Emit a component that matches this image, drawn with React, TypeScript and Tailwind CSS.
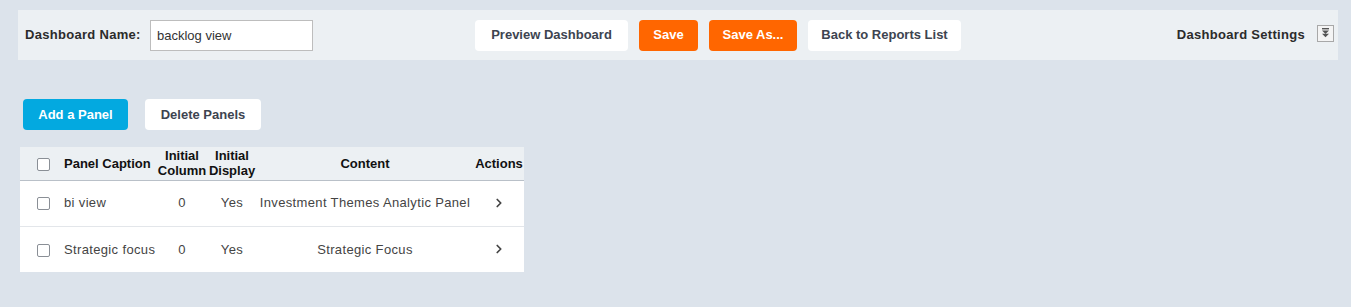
import { ChevronRight } from 'lucide-react';

const rows = [
  { caption: 'bi view', column: '0', display: 'Yes', content: 'Investment Themes Analytic Panel' },
  { caption: 'Strategic focus', column: '0', display: 'Yes', content: 'Strategic Focus' },
];

function Box() {
  return <span className="inline-block h-[13px] w-[13px] rounded-[2px] border border-[#8a8f96] bg-white align-middle" />;
}

export default function App() {
  return (
    <div className="min-h-[307px] bg-[#dce3eb] pl-[18px] pr-[13px] pt-[10px] text-[13px] text-[#333] [font-family:'Liberation_Sans',Arial,sans-serif]">
      {/* Toolbar */}
      <div className="flex h-[50px] items-center bg-[#ecf0f3] pl-[7px] pr-[4px]">
        <span className="w-[125px] font-bold tracking-[0.3px] text-[#2b2b2b]">Dashboard Name:</span>
        <input
          readOnly
          value="backlog view"
          className="h-[31px] w-[163px] border border-[#bdbdbd] bg-white px-[6px] text-[13px] text-[#333] outline-none"
        />
        <div className="ml-[162px] flex gap-[11px]">
          <button className="h-[31px] w-[153px] rounded-[4px] bg-white font-semibold text-[#3d4450]">Preview Dashboard</button>
          <button className="h-[31px] w-[59px] rounded-[4px] bg-[#ff6600] font-semibold text-white">Save</button>
          <button className="h-[31px] w-[88px] rounded-[4px] bg-[#ff6600] font-semibold text-white">Save As...</button>
          <button className="h-[31px] w-[153px] rounded-[4px] bg-white font-semibold text-[#3d4450]">Back to Reports List</button>
        </div>
        <span className="ml-auto font-bold tracking-[0.3px] text-[#2b2b2b]">Dashboard Settings</span>
        <span className="ml-[12px] mb-[4px] flex h-[17px] w-[17px] items-center justify-center border border-[#a8a8a8] bg-[#f4f4f4]">
          <svg width="9" height="10" viewBox="0 0 9 10" fill="#555">
            <rect x="1" y="0" width="7" height="1.4" />
            <path d="M1 2.5h7L4.5 6z" />
            <path d="M1 5.8h7L4.5 9.3z" />
          </svg>
        </span>
      </div>

      {/* Panel buttons */}
      <div className="mt-[39px] flex gap-[17px] pl-[5px]">
        <button className="h-[31px] w-[105px] rounded-[4px] bg-[#03a9e0] font-semibold text-white">Add a Panel</button>
        <button className="h-[31px] w-[116px] rounded-[4px] bg-white font-semibold text-[#3d4450]">Delete Panels</button>
      </div>

      {/* Panels table */}
      <table className="ml-[2px] mt-[17px] w-[504px] table-fixed border-collapse bg-white">
        <colgroup>
          <col className="w-[44px]" />
          <col className="w-[92px]" />
          <col className="w-[52px]" />
          <col className="w-[48px]" />
          <col className="w-[218px]" />
          <col className="w-[50px]" />
        </colgroup>
        <thead>
          <tr className="h-[33px] border-b border-[#b9c0c8] bg-[#ecf0f3] font-bold leading-[15px] text-[#111]">
            <th className="pl-[17px] text-left"><Box /></th>
            <th className="whitespace-nowrap text-left">Panel Caption</th>
            <th className="text-center">Initial Column</th>
            <th className="text-center">Initial Display</th>
            <th className="text-center">Content</th>
            <th className="text-center">Actions</th>
          </tr>
        </thead>
        <tbody>
          {rows.map((r, i) => (
            <tr key={r.caption} className={`h-[46px] tracking-[0.35px] text-[#444] ${i === 0 ? 'border-b border-[#e3e6ea]' : ''}`}>
              <td className="pl-[17px]"><Box /></td>
              <td className="whitespace-nowrap">{r.caption}</td>
              <td className="text-center">{r.column}</td>
              <td className="text-center">{r.display}</td>
              <td className="whitespace-nowrap text-center">{r.content}</td>
              <td>
                <div className="flex justify-center">
                  <ChevronRight size={14} strokeWidth={3} className="text-[#444]" />
                </div>
              </td>
            </tr>
          ))}
        </tbody>
      </table>
    </div>
  );
}
